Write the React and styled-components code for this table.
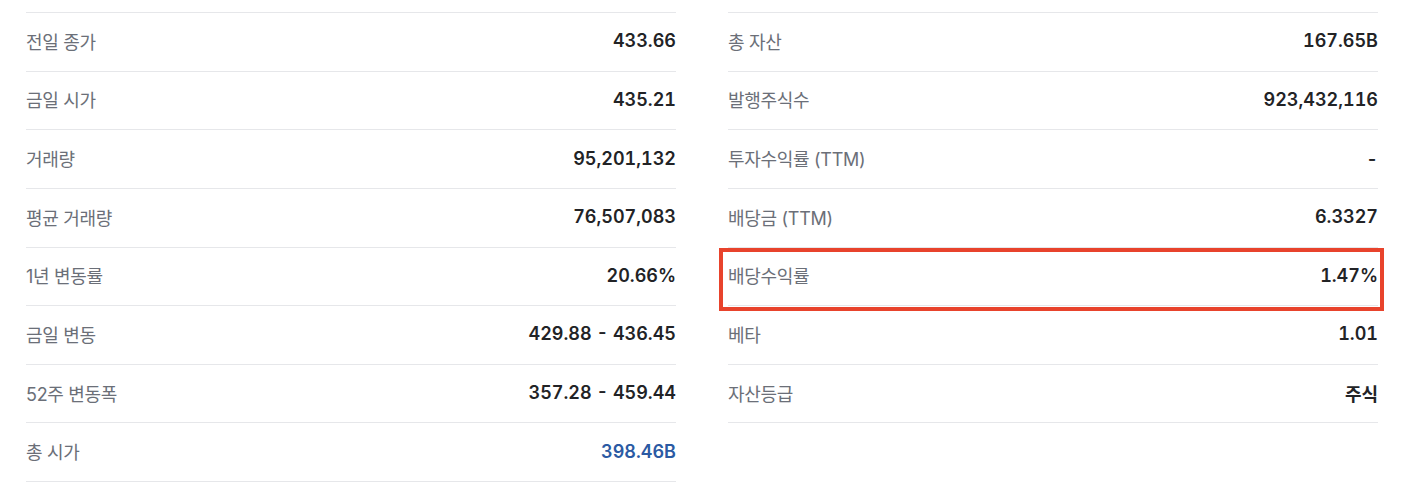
import React from "react";
import styled, { createGlobalStyle } from "styled-components";

const GlobalStyle = createGlobalStyle`
  body {
    margin: 0;
    background: #fff;
    font-family: Inter, "Noto Sans CJK KR", sans-serif;
  }
`;

const Page = styled.div`
  padding: 12px 24px 0 26px;
  display: grid;
  grid-template-columns: 650px 650px;
  column-gap: 52px;
  align-items: start;
`;

const List = styled.div`
  border-top: 1px solid #e6e7ea;
`;

const Row = styled.div`
  position: relative;
  box-sizing: border-box;
  height: 58.625px;
  padding-bottom: 2px;
  border-bottom: 1px solid #e6e7ea;
  display: flex;
  align-items: center;
  justify-content: space-between;

  ${(p) =>
    p.$highlight &&
    `
    &::after {
      content: "";
      position: absolute;
      top: 0;
      left: -9px;
      right: -6px;
      bottom: -6px;
      border: 4px solid #e8432c;
      pointer-events: none;
    }
  `}
`;

const Label = styled.span`
  font-family: Inter, "Noto Sans CJK KR", sans-serif;
  font-size: 18px;
  color: #6b6f78;
  letter-spacing: -0.3px;
`;

const Value = styled.span`
  font-family: Inter, "Noto Sans CJK KR", sans-serif;
  font-size: 18px;
  font-weight: 600;
  font-variant-numeric: tabular-nums;
  color: ${(p) => (p.$link ? "#2b5aa3" : "#222326")};
`;

const left = [
  ["전일 종가", "433.66"],
  ["금일 시가", "435.21"],
  ["거래량", "95,201,132"],
  ["평균 거래량", "76,507,083"],
  ["1년 변동률", "20.66%"],
  ["금일 변동", "429.88 - 436.45"],
  ["52주 변동폭", "357.28 - 459.44"],
  ["총 시가", "398.46B", true],
];

const right = [
  ["총 자산", "167.65B"],
  ["발행주식수", "923,432,116"],
  ["투자수익률 (TTM)", "-"],
  ["배당금 (TTM)", "6.3327"],
  ["배당수익률", "1.47%", false, true],
  ["베타", "1.01"],
  ["자산등급", "주식"],
];

function StatList({ rows }) {
  return (
    <List>
      {rows.map(([label, value, link, highlight]) => (
        <Row key={label} $highlight={highlight}>
          <Label>{label}</Label>
          <Value $link={link}>{value}</Value>
        </Row>
      ))}
    </List>
  );
}

export default function App() {
  return (
    <>
      <GlobalStyle />
      <Page>
        <StatList rows={left} />
        <StatList rows={right} />
      </Page>
    </>
  );
}
